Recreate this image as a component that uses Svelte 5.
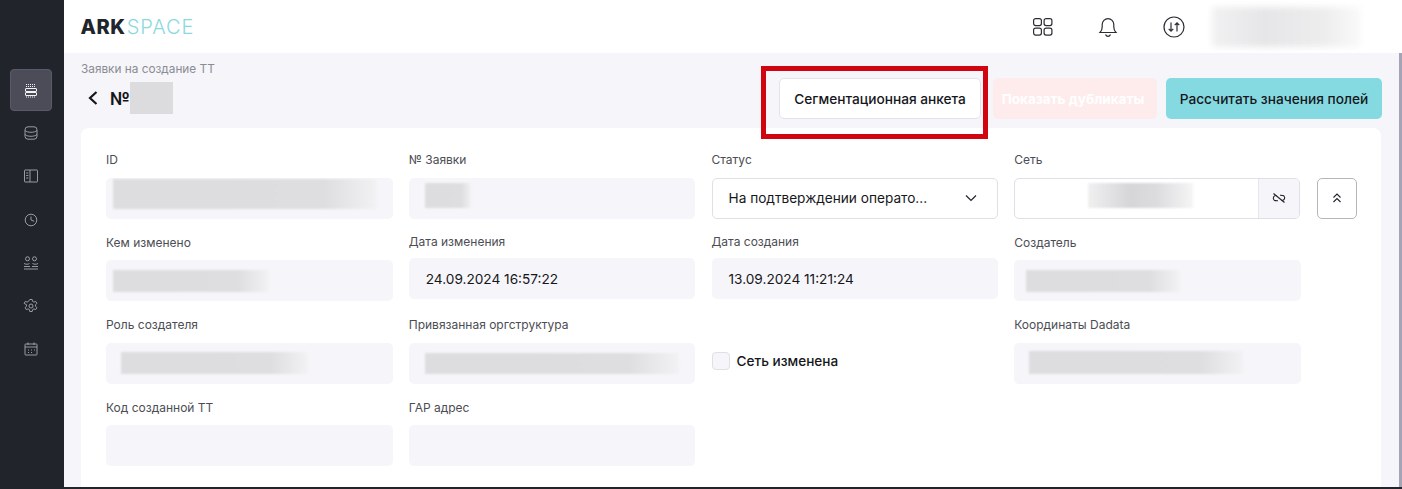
<script>
  const navIcons = ['db', 'book', 'clock', 'users', 'gear', 'calendar'];

  const rows = [
    [
      { label: 'ID', blur: [7, 1, 264, 30] },
      { label: '№ Заявки', blur: [16, 5, 46, 25] },
      { label: 'Статус', select: 'На подтверждении операто...' },
      { label: 'Сеть', linked: true }
    ],
    [
      { label: 'Кем изменено', blur: [7, 10, 156, 22] },
      { label: 'Дата изменения', value: '24.09.2024 16:57:22' },
      { label: 'Дата создания', value: '13.09.2024 11:21:24' },
      { label: 'Создатель', blur: [12, 10, 154, 22] }
    ],
    [
      { label: 'Роль создателя', blur: [15, 9, 187, 22] },
      { label: 'Привязанная оргструктура', blur: [16, 10, 254, 21] },
      { check: 'Сеть изменена' },
      { label: 'Координаты Dadata', blur: [15, 8, 214, 23] }
    ],
    [
      { label: 'Код созданной ТТ' },
      { label: 'ГАР адрес' }
    ]
  ];
</script>

<div class="app">
  <aside class="sidebar">
    <div class="nav-item active">
      <svg viewBox="0 0 16 16" width="16" height="16" fill="none" stroke="currentColor">
        <path d="M3 2.500h9M3 4.500h9" stroke-dasharray="1 1" />
        <rect x="2.500" y="6.500" width="11" height="3" rx=".5" />
        <rect x="2.500" y="10.500" width="11" height="3" rx=".5" />
        <path d="M3 15h9" stroke-dasharray="1 1" />
      </svg>
    </div>
    {#each navIcons as icon}
      <div class="nav-item">
        <svg viewBox="0 0 16 16" width="16" height="16" fill="none" stroke="currentColor" stroke-width=".9">
          {#if icon === 'db'}
            <rect x="2" y="1.800" width="12" height="12.400" rx="3" />
            <path d="M2 5.500c1.500 1.300 3.500 1.800 6 1.800s4.500-.5 6-1.800M2 9.500c1.500 1.300 3.500 1.800 6 1.800s4.500-.5 6-1.800" />
          {:else if icon === 'book'}
            <rect x="1.500" y="2" width="13" height="12" rx=".6" />
            <path d="M7 2v12M3.200 5h2.200M3.200 7.500h2.200M3.200 10h2.200" />
          {:else if icon === 'clock'}
            <circle cx="8" cy="8" r="5.800" />
            <path d="M8 4.500V8l3.200 1.300" />
          {:else if icon === 'users'}
            <circle cx="4.500" cy="3.800" r="2" />
            <circle cx="11.500" cy="3.800" r="2" />
            <path d="M1 8.500c2 1 4 1 5.500 0M9.500 8.500c2 1 3.800 1 5.500 0M1 11.500h6M9 11.500h6M1 14h14" />
          {:else if icon === 'gear'}
            <circle cx="8" cy="8" r="2" />
            <path d="M6.800 1.500h2.400l.4 1.900 1.300.7 1.800-.7 1.200 2-1.400 1.300v1.600l1.400 1.300-1.200 2-1.800-.7-1.300.7-.4 1.900H6.800l-.4-1.900-1.300-.7-1.800.7-1.200-2 1.400-1.300V6.700L1.100 5.400l1.200-2 1.800.7 1.300-.7z" />
          {:else}
            <rect x="2" y="3" width="12" height="11" rx=".6" />
            <path d="M2 6h12M5 1.500V4M11 1.500V4M5 9h1M8 9h1M11 9h1M5 11.500h1M8 11.500h1" />
          {/if}
        </svg>
      </div>
    {/each}
  </aside>

  <div class="main">
    <header class="topbar">
      <div class="logo"><b>ARK</b><span>SPACE</span></div>
      <div class="top-actions">
        <svg viewBox="0 0 22 22" width="22" height="22" fill="none" stroke="#2b2d33" stroke-width="1.200">
          <rect x="1.600" y="2.600" width="7.800" height="7" rx="2" />
          <rect x="12.100" y="2.600" width="7.800" height="7" rx="2" />
          <rect x="1.600" y="12.100" width="7.800" height="7" rx="2" />
          <rect x="12.100" y="12.100" width="7.800" height="7" rx="2" />
        </svg>
        <svg class="bell" viewBox="0 0 20 22" width="20" height="22" fill="none" stroke="#2b2d33" stroke-width="1.200">
          <path d="M2 16.500c1.500-1.500 2.200-3 2.200-5.500V8.500a5.800 5.800 0 0 1 11.600 0V11c0 2.500.7 4 2.200 5.500z" />
          <path d="M7.500 18.500c.5 1.200 1.400 1.800 2.500 1.800s2-.6 2.500-1.800" />
        </svg>
        <svg class="sync" viewBox="0 0 22 22" width="22" height="22" fill="none" stroke="#2b2d33" stroke-width="1.200">
          <circle cx="11" cy="11" r="10" />
          <path d="M8 6.500v8.500M5.700 12.800 8 15.200l2.300-2.400M14 15.500V7M11.700 9.200 14 6.800l2.300 2.400" />
        </svg>
        <div class="user-blur"></div>
      </div>
    </header>

    <section class="content">
      <div class="toolbar">
        <div class="heading">
          <div class="crumb">Заявки на создание ТТ</div>
          <div class="title">
            <svg viewBox="0 0 12 16" width="12" height="16" fill="none" stroke="#16171b" stroke-width="2.200">
              <path d="M9.500 2 3 8l6.500 6" />
            </svg>
            <span>№</span>
            <div class="title-blur"></div>
          </div>
        </div>
        <div class="buttons">
          <div class="highlighted">
            <button class="btn">Сегментационная анкета</button>
            <span class="red-frame"></span>
          </div>
          <button class="btn pink">Показать дубликаты</button>
          <button class="btn teal">Рассчитать значения полей</button>
        </div>
      </div>

      <div class="card">
        {#each rows as row}
          <div class="row">
            {#each row as field}
              {#if field.check}
                <label class="check">
                  <span class="box"></span>
                  {field.check}
                </label>
              {:else}
                <div class="field" class:raised={field.value}>
                  <div class="label">{field.label}</div>
                  {#if field.select}
                    <div class="control select">
                      <span>{field.select}</span>
                      <svg viewBox="0 0 12 8" width="12" height="8" fill="none" stroke="#22242b" stroke-width="1.200">
                        <path d="M1 1.500 6 6.500l5-5" />
                      </svg>
                    </div>
                  {:else if field.linked}
                    <div class="linked-row">
                      <div class="control linked">
                        <div class="linked-blur"></div>
                        <div class="unlink">
                          <svg viewBox="0 0 16 16" width="16" height="16" fill="none" stroke="#22242b" stroke-width="1.100">
                            <path d="M2.500 3.500 13.500 12.500" />
                            <path d="M5.500 5.500H5a2.700 2.700 0 0 0-1.800 4.700c.8.6 2.500.5 3.800.5M10.500 10.500h.5a2.700 2.700 0 0 0 1.800-4.700c-.8-.6-2.500-.5-3.800-.5" />
                          </svg>
                        </div>
                      </div>
                      <button class="collapse" aria-label="Свернуть">
                        <svg viewBox="0 0 12 12" width="12" height="12" fill="none" stroke="#22242b" stroke-width="1.100">
                          <path d="M2.500 5.500 6 2l3.500 3.500M2.500 10 6 6.500 9.500 10" />
                        </svg>
                      </button>
                    </div>
                  {:else}
                    <div class="control filled">
                      {#if field.value}<span class="value">{field.value}</span>{/if}
                      {#if field.blur}
                        <div
                          class="redact"
                          style="margin-left: {field.blur[0]}px; margin-top: {field.blur[1]}px; width: {field.blur[2]}px; height: {field.blur[3]}px"
                        ></div>
                      {/if}
                    </div>
                  {/if}
                </div>
              {/if}
            {/each}
          </div>
        {/each}
      </div>
    </section>
    <div class="scroll-edge"></div>
  </div>
</div>

<style>
  :global(body) {
    margin: 0;
    overflow: hidden;
    background: #f5f5fa;
  }

  .app {
    position: relative;
    display: flex;
    height: 489px;
    font-family: Inter, "Noto Sans", sans-serif;
    color: #16171b;
    overflow: hidden;
  }

  .sidebar {
    width: 64px;
    flex: none;
    background: #22242b;
    display: flex;
    flex-direction: column;
    align-items: center;
    padding: 69px 2px 0 0;
    box-sizing: border-box;
    gap: 1.200px;
  }

  .nav-item {
    width: 42px;
    height: 42px;
    display: flex;
    align-items: center;
    justify-content: center;
    color: #a8a9b0;
    border-radius: 4px;
    box-sizing: border-box;
  }

  .nav-item.active {
    background: #4b4c57;
    border: 1px solid #5a5b66;
    color: #f2f2f5;
  }

  .main {
    flex: 1;
    min-width: 0;
    display: flex;
    flex-direction: column;
  }

  .topbar {
    height: 53px;
    flex: none;
    background: #fff;
    display: flex;
    align-items: center;
    justify-content: space-between;
    padding: 0 0 0 16.500px;
  }

  .logo {
    font-size: 20px;
    line-height: 1;
    display: flex;
  }

  .logo b {
    font-weight: 800;
    color: #22242b;
    letter-spacing: .6px;
  }

  .logo span {
    font-weight: 300;
    color: #8bd9de;
    letter-spacing: .9px;
    margin-left: 1px;
  }

  .top-actions {
    display: flex;
    align-items: center;
    height: 100%;
  }

  .bell {
    margin-left: 44px;
  }

  .sync {
    margin-left: 45px;
  }

  .user-blur {
    width: 149px;
    height: 40px;
    margin: 0 41px 0 27px;
    background: linear-gradient(to right, #f1f1f2, #e6e6e8 35%, #ededee 75%, #fafafa);
    filter: blur(3px);
  }

  .content {
    flex: 1;
    min-height: 0;
    padding: 0 21px 0 17px;
    display: flex;
    flex-direction: column;
  }

  .toolbar {
    height: 75px;
    flex: none;
    display: flex;
    justify-content: space-between;
  }

  .heading {
    padding-top: 9px;
  }

  .crumb {
    font-size: 11.800px;
    line-height: 14px;
    color: #8b8c93;
  }

  .title {
    display: flex;
    align-items: center;
    margin: 6px 0 0 6px;
    font-size: 18px;
    font-weight: 700;
    height: 32px;
  }

  .title span {
    margin-left: 11px;
  }

  .title-blur {
    width: 43px;
    height: 32px;
    background: #dcdcdf;
  }

  .buttons {
    display: flex;
    gap: 12px;
    padding: 25px 0 0;
    margin-right: -1px;
  }

  .buttons > .btn.teal {
    margin-left: -3px;
  }

  .highlighted {
    position: relative;
  }

  .red-frame {
    position: absolute;
    left: -18px;
    top: -12px;
    right: -7px;
    bottom: -11px;
    border: 5px solid #d0050f;
    box-sizing: border-box;
    pointer-events: none;
  }

  .btn {
    height: 41px;
    padding: 0;
    border: 1px solid #e3e3ea;
    border-radius: 5px;
    background: #fff;
    font: 500 13.700px Inter, "Noto Sans", sans-serif;
    color: #16171b;
    width: 202px;
  }

  .btn.pink {
    width: 164px;
    border: none;
    background: #feeced;
    color: #fff;
    font-weight: 700;
    font-size: 13.500px;
    padding-right: 4px;
  }

  .btn.teal {
    width: 216px;
    border: none;
    background: #85dae2;
  }

  .card {
    flex: 1;
    background: #fff;
    border-radius: 8px 8px 0 0;
    padding: 24px 0 0 25px;
    margin-bottom: 2px;
  }

  .row {
    display: grid;
    grid-template-columns: repeat(4, 286.500px);
    column-gap: 16.250px;
    height: 82.500px;
    align-items: start;
  }

  .label {
    font-size: 12px;
    line-height: 16px;
    color: #4c4d54;
    margin-bottom: 9.700px;
  }

  .raised {
    margin-top: -.5px;
  }

  .raised .label {
    margin-bottom: 8px;
  }

  .control {
    height: 41px;
    box-sizing: border-box;
    border-radius: 5px;
    display: flex;
    align-items: center;
    font-size: 13.650px;
    overflow: hidden;
  }

  .filled {
    background: #f6f6fa;
  }

  .value {
    padding-left: 17px;
  }

  .redact {
    align-self: flex-start;
    background: linear-gradient(to right, #dddde0, #dedee1 80%, #f2f2f5);
    filter: blur(1px);
  }

  .select {
    border: 1px solid #dfdfe6;
    background: #fff;
    justify-content: space-between;
    padding: 0 20px 0 16px;
  }

  .linked-row {
    display: flex;
    gap: 17px;
  }

  .linked {
    width: 286px;
    flex: none;
    border: 1px solid #dfdfe6;
    justify-content: space-between;
  }

  .linked-blur {
    width: 105px;
    height: 25px;
    margin: -6px 0 0 73px;
    background: linear-gradient(to right, #f0f0f1, #d6d6d8 40%, #dcdcde 65%, #f5f5f6);
    filter: blur(1px);
  }

  .unlink {
    width: 40px;
    height: 100%;
    display: flex;
    align-items: center;
    justify-content: center;
    background: #f5f5fa;
    border-left: 1px solid #e6e6ec;
  }

  .collapse {
    width: 40px;
    height: 41px;
    flex: none;
    padding: 0;
    border: 1px solid #b5b6bc;
    border-radius: 5px;
    background: #fff;
    display: flex;
    align-items: center;
    justify-content: center;
  }

  .check {
    display: flex;
    align-items: center;
    gap: 7px;
    font-size: 13.600px;
    font-weight: 500;
    height: 41px;
    margin-top: 23.500px;
  }

  .box {
    width: 16px;
    height: 16px;
    border: 1px solid #dfdfe6;
    border-radius: 4px;
    background: #f5f5fa;
  }

  .scroll-edge {
    position: absolute;
    right: 0;
    top: 53px;
    bottom: 2px;
    width: 3px;
    background: #a4a4b6;
  }

  .app::after {
    content: "";
    position: absolute;
    left: 0;
    right: 0;
    top: 487px;
    height: 2px;
    background: #22242b;
  }
</style>
